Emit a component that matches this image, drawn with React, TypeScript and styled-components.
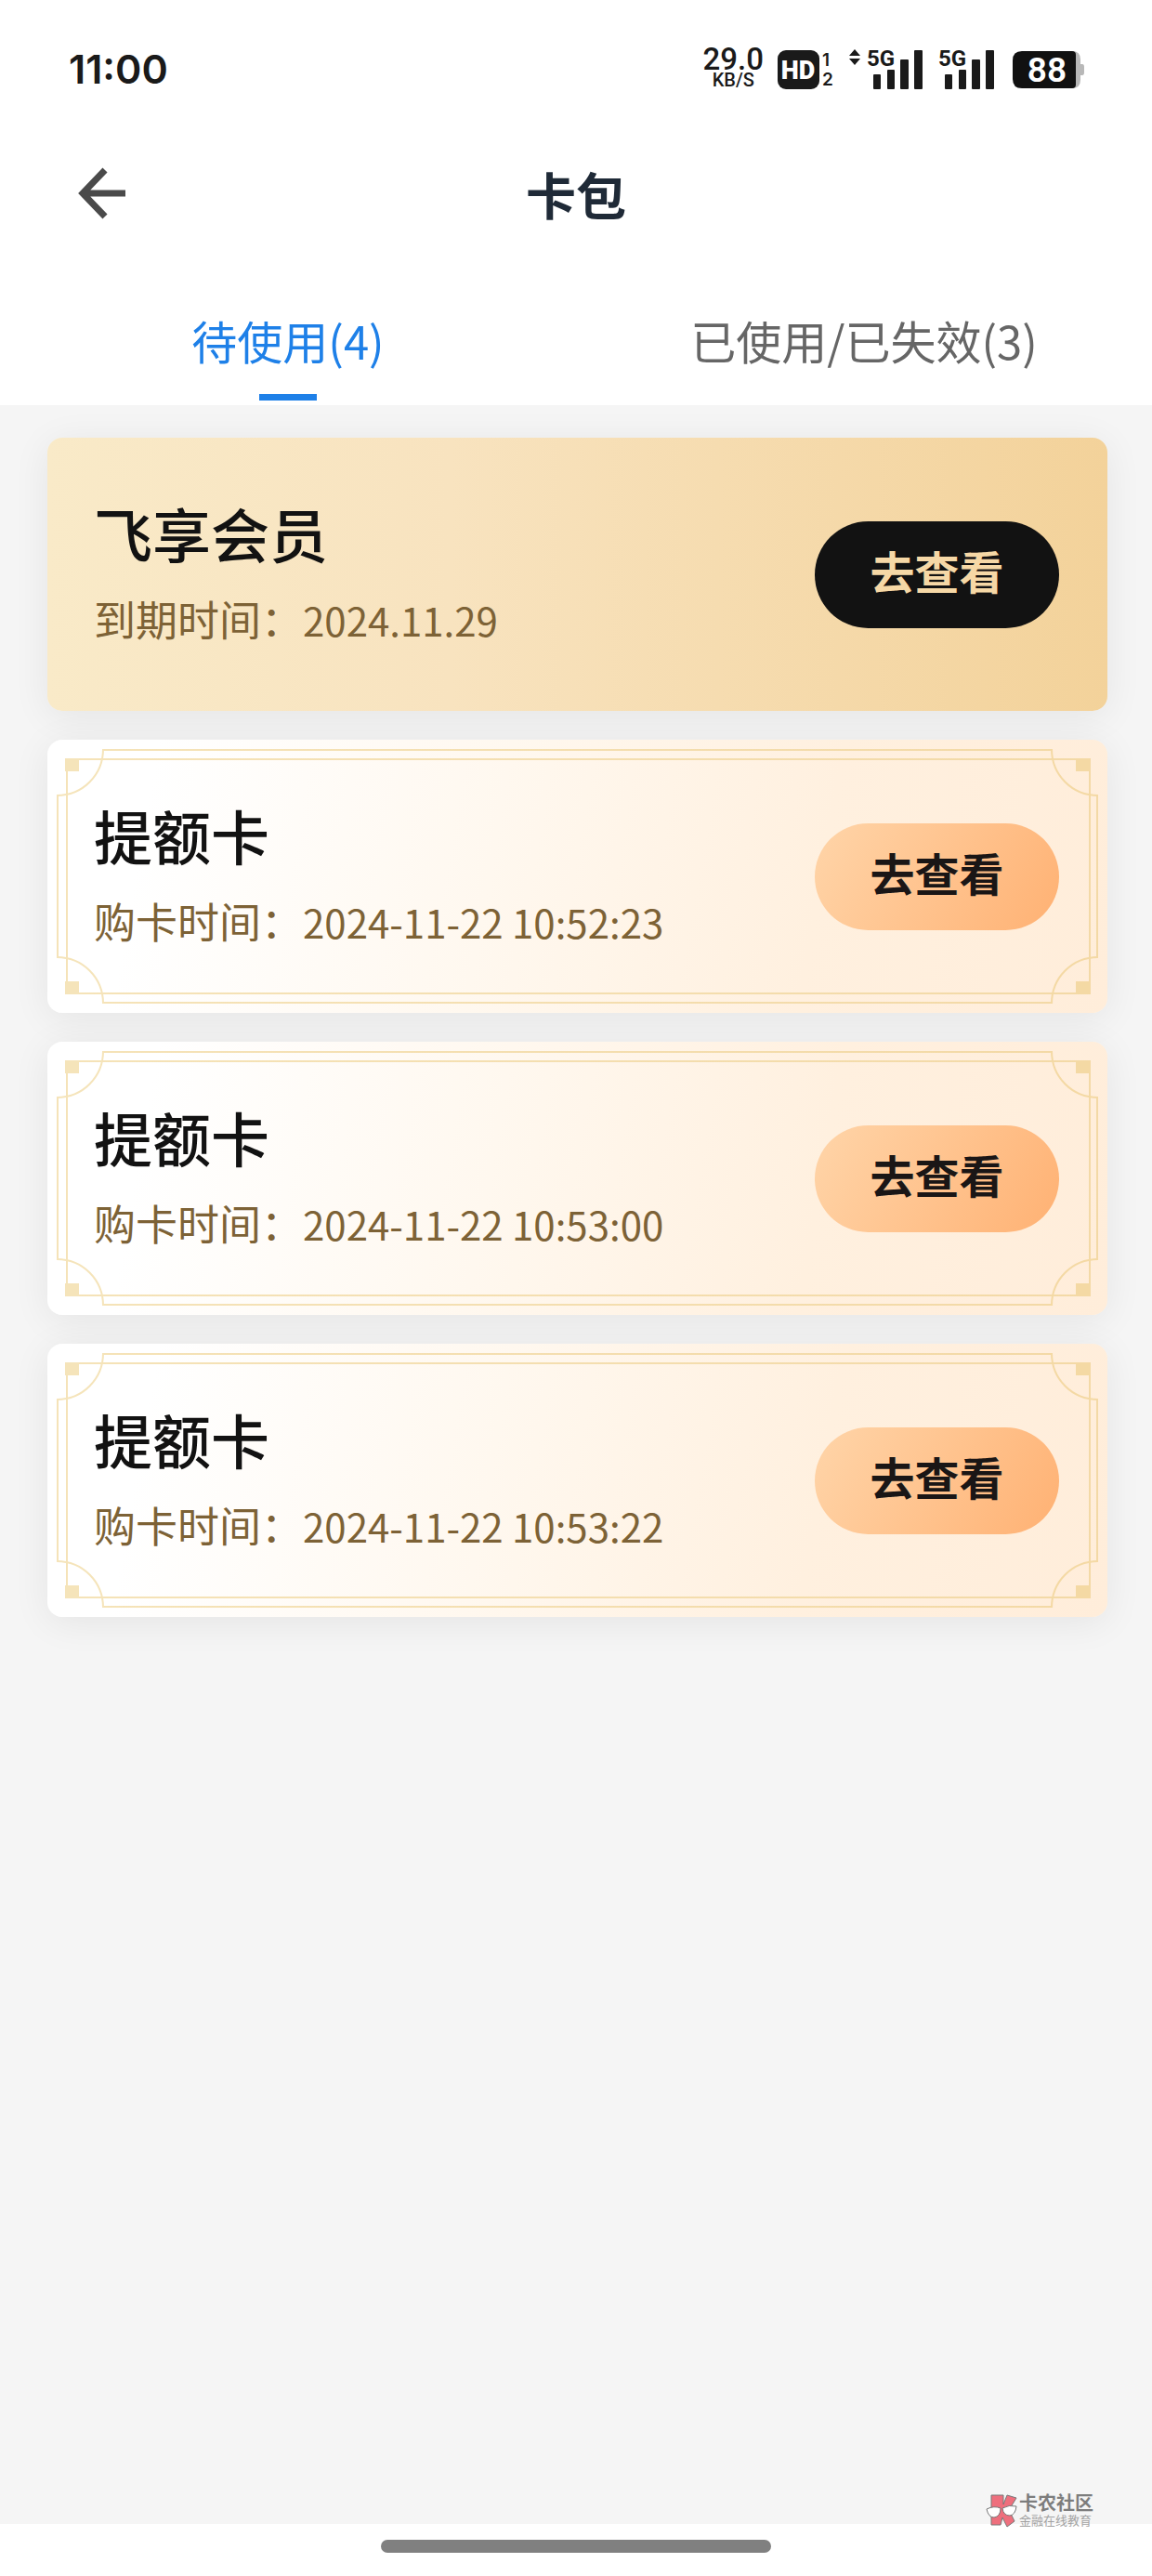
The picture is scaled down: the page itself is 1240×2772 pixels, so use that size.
import React from 'react';
import styled, { createGlobalStyle } from 'styled-components';

const GlobalStyle = createGlobalStyle`
  *, *::before, *::after { box-sizing: border-box; }
  html, body, #root { height: 100%; }
  body {
    margin: 0;
    background: #f5f5f5;
    font-family: 'Noto Sans CJK SC', 'Noto Sans', sans-serif;
    color: #121212;
  }
  button, a { font: inherit; }
`;

const Screen = styled.div`
  position: relative;
  display: flex;
  flex-direction: column;
  min-height: 100vh;
`;

const StatusBar = styled.div`
  display: flex;
  align-items: center;
  justify-content: space-between;
  height: 148px;
  padding: 0 73px 0 74px;
  background: #fff;
  color: #1a1a1a;
  font-family: Inter, 'Noto Sans', sans-serif;
`;

const Clock = styled.time`
  font-size: 43px;
  font-weight: 600;
  line-height: 48px;
`;

const StatusIcons = styled.div`
  display: flex;
  align-items: center;
  height: 48px;
`;

const Speed = styled.div`
  display: flex;
  flex-direction: column;
  align-items: center;
  margin-right: 15px;
  font-family: Roboto, 'Noto Sans', sans-serif;
  font-weight: 500;
`;

const SpeedValue = styled.span`
  font-size: 33px;
  line-height: 24px;
`;

const SpeedUnit = styled.span`
  font-size: 20px;
  line-height: 20px;
`;

const StatusSvg = styled.svg<{ $gap?: number }>`
  display: block;
  flex: none;
  margin-right: ${(p) => p.$gap ?? 0}px;
  overflow: visible;
  font-family: Inter, sans-serif;
`;

const Header = styled.header`
  display: grid;
  grid-template-columns: 100px 1fr 100px;
  align-items: center;
  height: 120px;
  padding: 0 60px;
  background: #fff;
`;

const BackButton = styled.button`
  display: flex;
  align-items: center;
  justify-content: center;
  width: 100px;
  height: 100px;
  padding: 0;
  border: 0;
  background: none;
  color: #4a4a4a;
`;

const Title = styled.h1`
  margin: 0;
  padding-top: 2px;
  font-size: 54px;
  font-weight: 700;
  line-height: 80px;
  text-align: center;
  color: #1f2a37;
`;

const Tabs = styled.div`
  display: flex;
  height: 168px;
  padding-top: 58px;
  background: #fff;
`;

const Tab = styled.button<{ $active?: boolean }>`
  display: flex;
  flex: 1;
  flex-direction: column;
  align-items: center;
  justify-content: space-between;
  padding: 0 0 5px;
  border: 0;
  background: none;
  color: ${(p) => (p.$active ? '#1e80e8' : '#666')};
  font-size: 49px;
  line-height: 80px;

  &::after {
    content: '';
    width: 62px;
    height: 7px;
    background: ${(p) => (p.$active ? '#1e80e8' : 'transparent')};
  }
`;

const CardList = styled.main`
  display: flex;
  flex: 1;
  flex-direction: column;
  gap: 31px;
  padding: 35px 48px 35px 51px;
  background: #f5f5f5;
`;

const Card = styled.article<{ $gold?: boolean }>`
  position: relative;
  display: flex;
  align-items: center;
  justify-content: space-between;
  height: 294px;
  padding: 0 52px 0 50px;
  border-radius: 16px;
  background: ${(p) =>
    p.$gold
      ? 'linear-gradient(90deg, #f9eac8 0%, #f8e3bf 38%, #f3d29a 100%)'
      : 'linear-gradient(100deg, #fff 10%, #fff8ef 42%, #fff0df 72%, #ffedda 100%)'};
  box-shadow: 0 6px 40px rgba(0, 0, 0, 0.07);
`;

const CardText = styled.div`
  display: flex;
  flex-direction: column;
  padding-bottom: 2px;
`;

const CardTitle = styled.h2`
  margin: 0;
  font-size: 63px;
  font-weight: 500;
  line-height: 98px;
`;

const CardMeta = styled.p`
  margin: 0;
  color: #7d6236;
  font-size: 45px;
  line-height: 88px;
`;

const DateText = styled.time`
  font-size: 42px;
`;

const ViewButton = styled.button<{ $gold?: boolean }>`
  flex: none;
  width: 263px;
  height: 115px;
  padding: 0 0 10px;
  border: 0;
  border-radius: 58px;
  background: ${(p) => (p.$gold ? '#121212' : 'linear-gradient(120deg, #ffd3a6 5%, #ffb376 95%)')};
  color: ${(p) => (p.$gold ? '#f6d8a6' : '#1a1616')};
  font-size: 48px;
  font-weight: 700;
  line-height: 72px;
`;

const Ornament = styled.div`
  position: absolute;
  inset: 0;
  pointer-events: none;
`;

const InnerFrame = styled.i`
  position: absolute;
  inset: 20px 18px 20px 20px;
  border: 2px solid;
  border-image: linear-gradient(90deg, #f5e3b8, #f3d9a6) 2;
`;

const HorizontalLines = styled.i`
  position: absolute;
  inset: 10px 59px;
  border: solid;
  border-width: 2px 0;
  border-image: linear-gradient(90deg, #f5e3b8, #f3d9a6) 2;
`;

const VerticalLines = styled.i`
  position: absolute;
  inset: 59px 10px;
  border: solid;
  border-width: 0 2px;
  border-color: #f3d9a6 #f3d9a6 #f3d9a6 #f5e3b8;
`;

const CornerSvg = styled.svg<{ $right?: boolean; $bottom?: boolean }>`
  position: absolute;
  ${(p) => (p.$right ? 'right: 10px;' : 'left: 10px;')}
  ${(p) => (p.$bottom ? 'bottom: 10px;' : 'top: 10px;')}
  transform: scale(${(p) => (p.$right ? -1 : 1)}, ${(p) => (p.$bottom ? -1 : 1)});
  color: ${(p) => (p.$right ? '#f4d9a4' : '#f5e4ba')};
`;

const HomeBar = styled.footer`
  display: flex;
  justify-content: center;
  height: 56px;
  padding-top: 17px;
  background: #fff;

  &::before {
    content: '';
    width: 420px;
    height: 14px;
    border-radius: 7px;
    background: #808080;
  }
`;

const Watermark = styled.div`
  position: absolute;
  right: 63px;
  bottom: 52px;
  display: flex;
  align-items: center;
  gap: 2px;
  color: #7d7d7d;
  font-family: 'Liberation Sans', 'Noto Sans CJK SC', sans-serif;
`;

const WatermarkText = styled.div`
  display: flex;
  flex-direction: column;
`;

const WatermarkName = styled.strong`
  font-size: 20px;
  font-weight: 700;
  line-height: 21px;
`;

const WatermarkTag = styled.span`
  color: #a3a3a3;
  font-size: 13px;
  line-height: 15px;
`;

function Corner(props: { right?: boolean; bottom?: boolean }) {
  return (
    <CornerSvg $right={props.right} $bottom={props.bottom} width="52" height="52" viewBox="0 0 52 52" fill="none">
      <path d="M50 0C50 28 28 50 0 50" stroke="currentColor" strokeWidth="2" />
      <rect x="9" y="10" width="15" height="14" fill="currentColor" />
    </CornerSvg>
  );
}

function CardOrnament() {
  return (
    <Ornament aria-hidden="true">
      <InnerFrame />
      <HorizontalLines />
      <VerticalLines />
      <Corner />
      <Corner right />
      <Corner bottom />
      <Corner right bottom />
    </Ornament>
  );
}

function Signal({ data, gap }: { data?: boolean; gap: number }) {
  const lead = data ? 20 : 0;
  return (
    <StatusSvg $gap={gap} width={60 + lead} height="48" viewBox={`${-lead} 0 ${60 + lead} 48`} fill="currentColor">
      {data && <path d="M-19 10l6-7 6 7zM-19 13h12l-6 7z" />}
      <text x="0" y="21" fontSize="24" fontWeight="700" fontFamily="Roboto, sans-serif">5G</text>
      <rect x="7" y="30" width="8" height="16" rx="1" />
      <rect x="22" y="25" width="8" height="21" rx="1" />
      <rect x="36" y="14" width="9" height="32" rx="1" />
      <rect x="51" y="4" width="9" height="42" rx="1" />
    </StatusSvg>
  );
}

const cards = [
  { title: '飞享会员', label: '到期时间：', date: '2024.11.29', gold: true },
  { title: '提额卡', label: '购卡时间：', date: '2024-11-22 10:52:23' },
  { title: '提额卡', label: '购卡时间：', date: '2024-11-22 10:53:00' },
  { title: '提额卡', label: '购卡时间：', date: '2024-11-22 10:53:22' },
];

export default function App() {
  return (
    <Screen>
      <GlobalStyle />
      <StatusBar>
        <Clock>11:00</Clock>
        <StatusIcons>
          <Speed>
            <SpeedValue>29.0</SpeedValue>
            <SpeedUnit>KB/S</SpeedUnit>
          </Speed>
          <StatusSvg $gap={16} width="60" height="48" viewBox="0 0 60 48">
            <rect x="0" y="4" width="45" height="42" rx="9" fill="currentColor" />
            <text x="22" y="35" fontSize="27" fontWeight="900" fontFamily="Roboto, sans-serif" fill="#fff" textAnchor="middle">HD</text>
            <text x="48" y="21" fontSize="19" fontWeight="600" fill="currentColor">1</text>
            <text x="48" y="42" fontSize="19" fontWeight="600" fill="currentColor">2</text>
          </StatusSvg>
          <Signal data gap={17} />
          <Signal gap={20} />
          <StatusSvg width="77" height="48" viewBox="0 0 77 48">
            <path d="M62 5h2q9 0 9 9v5h2q2 0 2 3v6q0 3-2 3h-2v5q0 9-9 9h-2z" fill="#b8b8b8" />
            <path d="M10 5h54a4 4 0 0 1 4 4v32a4 4 0 0 1-4 4H10Q0 45 0 35V15Q0 5 10 5z" fill="#111" />
            <text x="37" y="38" fontSize="37" fontWeight="600" fontFamily="Roboto, sans-serif" fill="#fff" textAnchor="middle">88</text>
          </StatusSvg>
        </StatusIcons>
      </StatusBar>

      <Header>
        <BackButton aria-label="返回">
          <svg width="52" height="56" viewBox="0 0 52 56" fill="none" stroke="currentColor" strokeWidth="7">
            <path d="M29 3L5 28L29 53M5 28H51" />
          </svg>
        </BackButton>
        <Title>卡包</Title>
      </Header>

      <Tabs role="tablist">
        <Tab role="tab" aria-selected="true" $active>待使用(4)</Tab>
        <Tab role="tab" aria-selected="false">已使用/已失效(3)</Tab>
      </Tabs>

      <CardList>
        {cards.map((card) => (
          <Card key={card.date} $gold={card.gold}>
            {!card.gold && <CardOrnament />}
            <CardText>
              <CardTitle>{card.title}</CardTitle>
              <CardMeta>
                {card.label}
                <DateText>{card.date}</DateText>
              </CardMeta>
            </CardText>
            <ViewButton $gold={card.gold}>去查看</ViewButton>
          </Card>
        ))}
      </CardList>

      <HomeBar />

      <Watermark>
        <svg width="34" height="36" viewBox="0 0 34 36" stroke="#777" strokeWidth="1" aria-hidden="true">
          <path d="M6 1h13v10l4-10 10 3-8 13 6 12-8 6-5-10-2 8H6z" fill="#ee6f7d" />
          <path d="M1 16q8-4 15-1 0 9-7 10-6 0-8-9zM18 15q7-4 15-2-1 9-7 10-7 0-8-8z" fill="#fff" />
        </svg>
        <WatermarkText>
          <WatermarkName>卡农社区</WatermarkName>
          <WatermarkTag>金融在线教育</WatermarkTag>
        </WatermarkText>
      </Watermark>
    </Screen>
  );
}
